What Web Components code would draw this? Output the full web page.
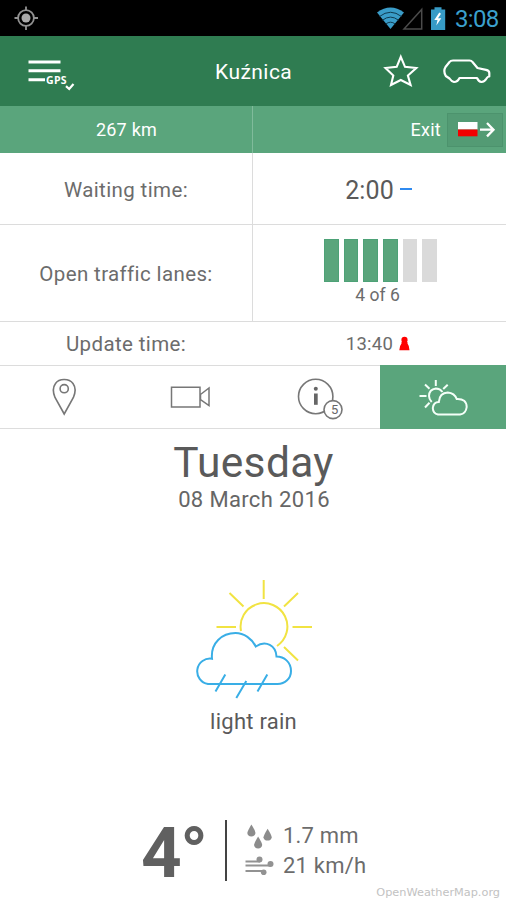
<!DOCTYPE html>
<html lang="en">
<head>
<meta charset="utf-8">
<title>Border crossing</title>
<style>
html,body{margin:0;padding:0;background:#fff}
body{font-family:Roboto,"Noto Sans",sans-serif;color:#555;width:506px;height:900px;overflow:hidden}
</style>
</head>
<body>
<border-app></border-app>
<script>
// Each icon: [viewBox, markup]. One viewBox unit equals one CSS pixel.
const ICONS = {
  target: ['14 6 24 24', '<g fill="none" stroke="#929292" stroke-width="1.8"><circle cx="26" cy="18" r="7.9"/><path d="M26 6.5v4M26 26v4.500M14.500 18h4M34 18h4"/></g><circle cx="26" cy="18" r="4.500" fill="#aaa"/>'],
  wifi: ['376 6 29 24', '<path d="M377 12.500Q390.500 2.500 404 12.500L390.500 29Z" fill="#3a9cc8"/><path d="M379.500 16.500q11-8.500 22 0M382.500 20.200q8-6.200 16 0M385.800 24q4.700-3.600 9.400 0" fill="none" stroke="#0f3a50" stroke-width="1"/>'],
  signal: ['402 6 22 24', '<path d="M404 29L421.700 9.500V29Z" fill="none" stroke="#4b4b4b" stroke-width="1.500"/>'],
  battery: ['429 5 18 25', '<path d="M431 8.500h3.500V6.200h7v2.300h3.700V29H431Z" fill="#379bc6"/><path d="M439.300 11.500l-5 7.500h3.200l-1.200 5.500 5-7.200h-3.300l3-4.500Z" fill="#fff"/>'],
  menu: ['26 56 50 36', '<path d="M28.500 62H60.500M28.500 70.800H60.500M28.500 79.700H45" stroke="#fff" stroke-width="3"/><path d="M66 86.200l3.200 2.800 4.300-5" fill="none" stroke="#fff" stroke-width="2.200"/>'],
  star: ['383 54 36 36', '<path d="M400.800 57.800l4.200 10 11.300 1.200-8.400 7.500 2.700 9.500-9.800-5-9.800 5 2.300-9.500-7.800-7.500 11.200-1.200Z" fill="none" stroke="#fff" stroke-width="2.100"/>'],
  car: ['442 56 50 28', '<path d="M449.500 61Q450.500 59.500 453 59.500H469.500Q471.500 59.500 472.500 61L477.500 67L486 68.800Q489.300 69.500 489.300 72V75.500Q487.500 75.500 486.500 77.500Q484.500 81 481.500 81Q478.500 80.500 477 77H459.500Q457.500 81 454 81Q451.500 80.500 449.500 77.500L445.800 75Q443 70 445.500 66Z" fill="none" stroke="#fff" stroke-width="2.200" stroke-linejoin="round"/>'],
  exit: ['458 118 40 22', '<path d="M459 121h19.500v7.500H459Z" fill="#fff"/><path d="M459 128.500h19.500v6.800H459Z" fill="#f20000"/><path d="M481 128.700h13.500M488 122l6.500 6.700-6.500 6.700" fill="none" stroke="#fff" stroke-width="2.300"/>'],
  person: ['398 335 13 15', '<circle cx="404.500" cy="338.900" r="3.100" fill="red"/><path d="M401.500 341h6V342.500Q409.500 345 409.500 349.300H399.300Q399.300 345 401.500 342.500Z" fill="red"/>'],
  pin: ['48 376 32 42', '<g fill="none" stroke="#777" stroke-width="1.600"><path d="M64.200 414L55 397.500Q51.500 389 55.500 383.500C59 378.400 69 378.100 73 383.500Q77 389 73.400 397.500Z"/><circle cx="64.200" cy="388.700" r="4.100"/></g>'],
  camera: ['168 382 46 30', '<path d="M171.500 387.300h28.500v19.700h-28.500ZM200.500 394.500l8.500-6.500v17.500l-8.500-6Z" fill="none" stroke="#777" stroke-width="1.500"/>'],
  info: ['296 376 50 46', '<g stroke="#777" fill="none" stroke-width="1.600"><circle cx="316.700" cy="396.500" r="17.200"/><circle cx="334" cy="409.600" r="9" fill="#fff"/></g><circle cx="316.800" cy="388.800" r="2" fill="#666"/><path d="M315 393.500h3.700v11.300H315Z" fill="#666"/>'],
  weather: ['416 376 54 42', '<g fill="none" stroke="#f4fff8" stroke-width="2"><path d="M435.800 380v6M447.700 384.700l-4.500 4.300M425 384.500l4.500 4.200M419.500 396h7M425 407.500l4.500-4.800"/><path d="M431.700 402Q429 399 429 396Q429.200 389.500 435.800 388.600Q440 388.800 442.500 392"/><path d="M438 414.500Q433 413.500 432.800 408Q433.500 402 438.800 402Q439.500 392.800 447.800 392.500Q454.500 393 456.700 399Q466.500 398.500 466.700 407Q466 413.500 460 414.500Z"/></g>'],
  rain: ['192 576 124 126', '<g fill="none" stroke-width="2"><g stroke="#f1e342"><path d="M241 631A23.400 23.400 0 1 1 277 646"/><path d="M263.700 580v19M298 593l-14 13.500M229.500 593l14 13.500M216.500 627H236M292.500 627H312M284 647l14 13.500"/></g><g stroke="#39aee6"><path d="M208 684A12.700 12.700 0 0 1 212 658.700C210.500 643 222 633 235.500 633C244 633 252 639 255.800 646.500C266 639.500 276 646 276.500 656.500C284 656.500 291 662 291 671C291 678.500 285 684 277.500 684Z"/><path d="M225.300 674.500l-9.800 17M246.300 681l-10 17M267.300 674.500l-9.800 17"/></g></g>'],
  drops: ['244 820 30 28', '<g fill="#8c8c8c"><path d="M251.400 822.500Q255.500 829 255.500 831Q255 834.300 251.400 834.400Q247.700 834.300 247.300 831Q247.500 829 251.400 822.500Z"/><path transform="translate(16.200 4.200)" d="M251.400 822.500Q255.500 829 255.500 831Q255 834.300 251.400 834.400Q247.700 834.300 247.300 831Q247.500 829 251.400 822.500Z"/><path transform="translate(6.700 12)" d="M251.400 822.500Q255.500 829 255.500 831Q255 834.300 251.400 834.400Q247.700 834.300 247.300 831Q247.500 829 251.400 822.500Z"/></g>'],
  wind: ['244 853 30 24', '<path d="M245.500 860.500H260M245.500 864.500H270M245.500 870H263" fill="none" stroke="#929292" stroke-width="1.800"/><g fill="#929292"><circle cx="259.500" cy="858.500" r="3"/><circle cx="270.500" cy="863" r="3"/><circle cx="263.700" cy="871.200" r="2.800"/></g>']
};
const define = (name, css, html, setup) => {
  const t = document.createElement('template');
  t.innerHTML = `<style>${css}</style>${html}`;
  customElements.define(name, class extends HTMLElement {
    constructor(){ super(); this.attachShadow({mode:'open'}).append(t.content.cloneNode(true)); }
    connectedCallback(){ if (setup) setup(this, this.shadowRoot); }
  });
};

define('ui-icon', ':host{display:block;flex:none}svg{display:block}', '<div></div>', (el, root) => {
  const [vb, body] = ICONS[el.getAttribute('name')];
  const [, , w, h] = vb.split(' ');
  root.querySelector('div').innerHTML = `<svg width="${w}" height="${h}" viewBox="${vb}">${body}</svg>`;
});

define('status-bar', `
  :host{display:flex;height:36px;box-sizing:border-box;background:#000;color:#3ba0cd;padding:0 7px 0 14px;align-items:center}
  .gap{flex:1}.sig{margin-left:-3px}.bat{margin-left:5px}
  span{font-size:24px;line-height:36px;letter-spacing:-.7px;margin-left:8px;width:44px;white-space:nowrap;padding-top:1px}`,
  `<ui-icon name="target"></ui-icon><div class="gap"></div><ui-icon name="wifi"></ui-icon><ui-icon class="sig" name="signal"></ui-icon><ui-icon class="bat" name="battery"></ui-icon><span>3:08</span>`);

define('app-bar', `
  :host{display:grid;grid-template-columns:189px auto 1fr;align-items:center;height:70px;background:#2f7c51;color:#fff;box-sizing:border-box;padding:0 14px 0 26px}
  .menu{display:flex;align-items:center;padding-top:6px;position:relative}
  .gps{position:absolute;left:20px;top:23px;font:700 10.500px/14px "Open Sans",sans-serif;letter-spacing:.3px}
  h1{margin:0;font-size:21px;font-weight:400;letter-spacing:.45px;line-height:28px;padding-top:1px}
  .actions{display:flex;justify-content:flex-end;align-items:center;gap:23px}`,
  `<div class="menu"><ui-icon name="menu"></ui-icon><span class="gps">GPS</span></div><h1><slot></slot></h1><div class="actions"><ui-icon name="star"></ui-icon><ui-icon name="car"></ui-icon></div>`);

define('distance-bar', `
  :host{display:grid;grid-template-columns:253px 1fr;height:47px;background:#5aa57c;color:#fff;font-size:18px;letter-spacing:.25px}
  div{display:flex;align-items:center}
  .km{justify-content:center;border-right:1px solid #80bb9b;padding-left:1px}
  .exit{justify-content:flex-end;gap:6px;padding-right:3px}
  .btn{width:56px;height:34px;box-sizing:border-box;background:#539b74;border:1px solid #4c936d;justify-content:center;padding-left:4px}`,
  `<div class="km"><slot></slot></div><div class="exit"><span>Exit</span><div class="btn"><ui-icon name="exit"></ui-icon></div></div>`);

define('info-row', `
  :host{display:grid;grid-template-columns:253px 1fr;box-sizing:border-box;border-bottom:1px solid #dcdcdc;color:#6c6c6c;font-size:20.500px;letter-spacing:.38px}
  .k,.v{display:flex;align-items:center;justify-content:center;white-space:nowrap}
  .k{border-right:1px solid #dcdcdc;padding-top:2px}
  .v{padding-right:2px}
  :host([plain]) .k{border-right-color:transparent;padding-top:1px}`,
  `<div class="k"><slot name="label"></slot></div><div class="v"><slot></slot></div>`);

define('lane-meter', `
  :host{display:flex;flex-direction:column;align-items:center;font-size:17.500px;letter-spacing:.05px;line-height:22px;padding:1px 2px 3px 0}
  .bars{display:flex;gap:5px;margin-bottom:2px;margin-left:6px}
  i{width:14.600px;height:43px;background:#dadada}i.on{background:#5aa57c;box-shadow:inset 0 0 0 1px #4da277}`,
  `<div class="bars"></div><span></span>`, (el, root) => {
    const open = +el.getAttribute('open'), total = +el.getAttribute('total');
    root.querySelector('.bars').innerHTML = Array.from({length: total}, (_, i) => `<i class="${i < open ? 'on' : ''}"></i>`).join('');
    root.querySelector('span').textContent = `${open} of ${total}`;
  });

define('tab-bar', `
  :host{display:grid;grid-template-columns:127px 127px 126px 126px;height:63px;box-sizing:border-box;border-bottom:1px solid #ddd}
  div{display:flex;align-items:center;justify-content:center;position:relative}
  .active{background:#5aa57c;margin:-1px 0}
  .cam{padding-left:1px}.info{padding-left:6px;padding-top:3px}
  .count{position:absolute;left:77px;top:36px;font-size:13px;line-height:16px;color:#666}`,
  `<div><ui-icon name="pin"></ui-icon></div><div class="cam"><ui-icon name="camera"></ui-icon></div><div class="info"><ui-icon name="info"></ui-icon><span class="count">5</span></div><div class="active"><ui-icon name="weather"></ui-icon></div>`);

define('weather-panel', `
  :host{display:flex;flex-direction:column;align-items:center;height:471px;color:#5a5a5a;white-space:nowrap}
  h2{font-size:42.500px;line-height:50px;font-weight:400;letter-spacing:.35px;margin:9px 0 0;padding-left:1px}
  .date{font-size:22px;line-height:26px;letter-spacing:.35px;margin-top:-1px;padding-left:2px;color:#666}
  .pic{margin-top:63px;margin-left:2px}
  .desc{font-size:22px;line-height:26px;letter-spacing:.25px;margin-top:7px;padding-left:1px}
  .now{display:flex;width:506px;box-sizing:border-box;padding-left:141px;margin-top:83px;height:64px;align-items:center}
  .temp{font-size:71px;font-weight:700;line-height:64px;width:84px;color:#606060;height:59px;letter-spacing:-1.500px}
  .rule{width:2px;height:61px;background:#444;margin-right:17px}
  .stats{display:grid;grid-template-columns:30px auto;column-gap:9px;grid-template-rows:30px 30px;align-items:center;font-size:22px;letter-spacing:.2px;color:#6c6c6c;padding-top:1px}
  .credit{align-self:flex-end;margin:4px 6px 0 0;font:11.300px/14px "DejaVu Sans",sans-serif;color:#c2c2c2}`,
  `<h2>Tuesday</h2><div class="date">08 March 2016</div><ui-icon class="pic" name="rain"></ui-icon><div class="desc">light rain</div>
   <div class="now"><div class="temp">4°</div><div class="rule"></div><div class="stats"><ui-icon name="drops"></ui-icon><span>1.7 mm</span><ui-icon name="wind"></ui-icon><span>21 km/h</span></div></div>
   <div class="credit">OpenWeatherMap.org</div>`);

define('border-app', `
  :host{display:block;width:506px;height:900px;background:#fff;overflow:hidden}
  .wait{font-size:25px;letter-spacing:.1px;color:#5a5a5a;padding-top:3px}.dash{width:12px;height:2px;background:#2f8af0;margin-left:6px}
  .upd{font-size:18.500px;letter-spacing:.25px}.person{margin-left:5px}`,
  `<status-bar></status-bar><app-bar>Kuźnica</app-bar><distance-bar>267 km</distance-bar>
   <info-row style="height:72px"><span slot="label">Waiting time:</span><span class="wait">2:00</span><div class="dash"></div></info-row>
   <info-row style="height:97px"><span slot="label">Open traffic lanes:</span><lane-meter open="4" total="6"></lane-meter></info-row>
   <info-row plain style="height:44px"><span slot="label">Update time:</span><span class="upd">13:40</span><ui-icon class="person" name="person"></ui-icon></info-row>
   <tab-bar></tab-bar><weather-panel></weather-panel>`);
</script>
</body>
</html>
